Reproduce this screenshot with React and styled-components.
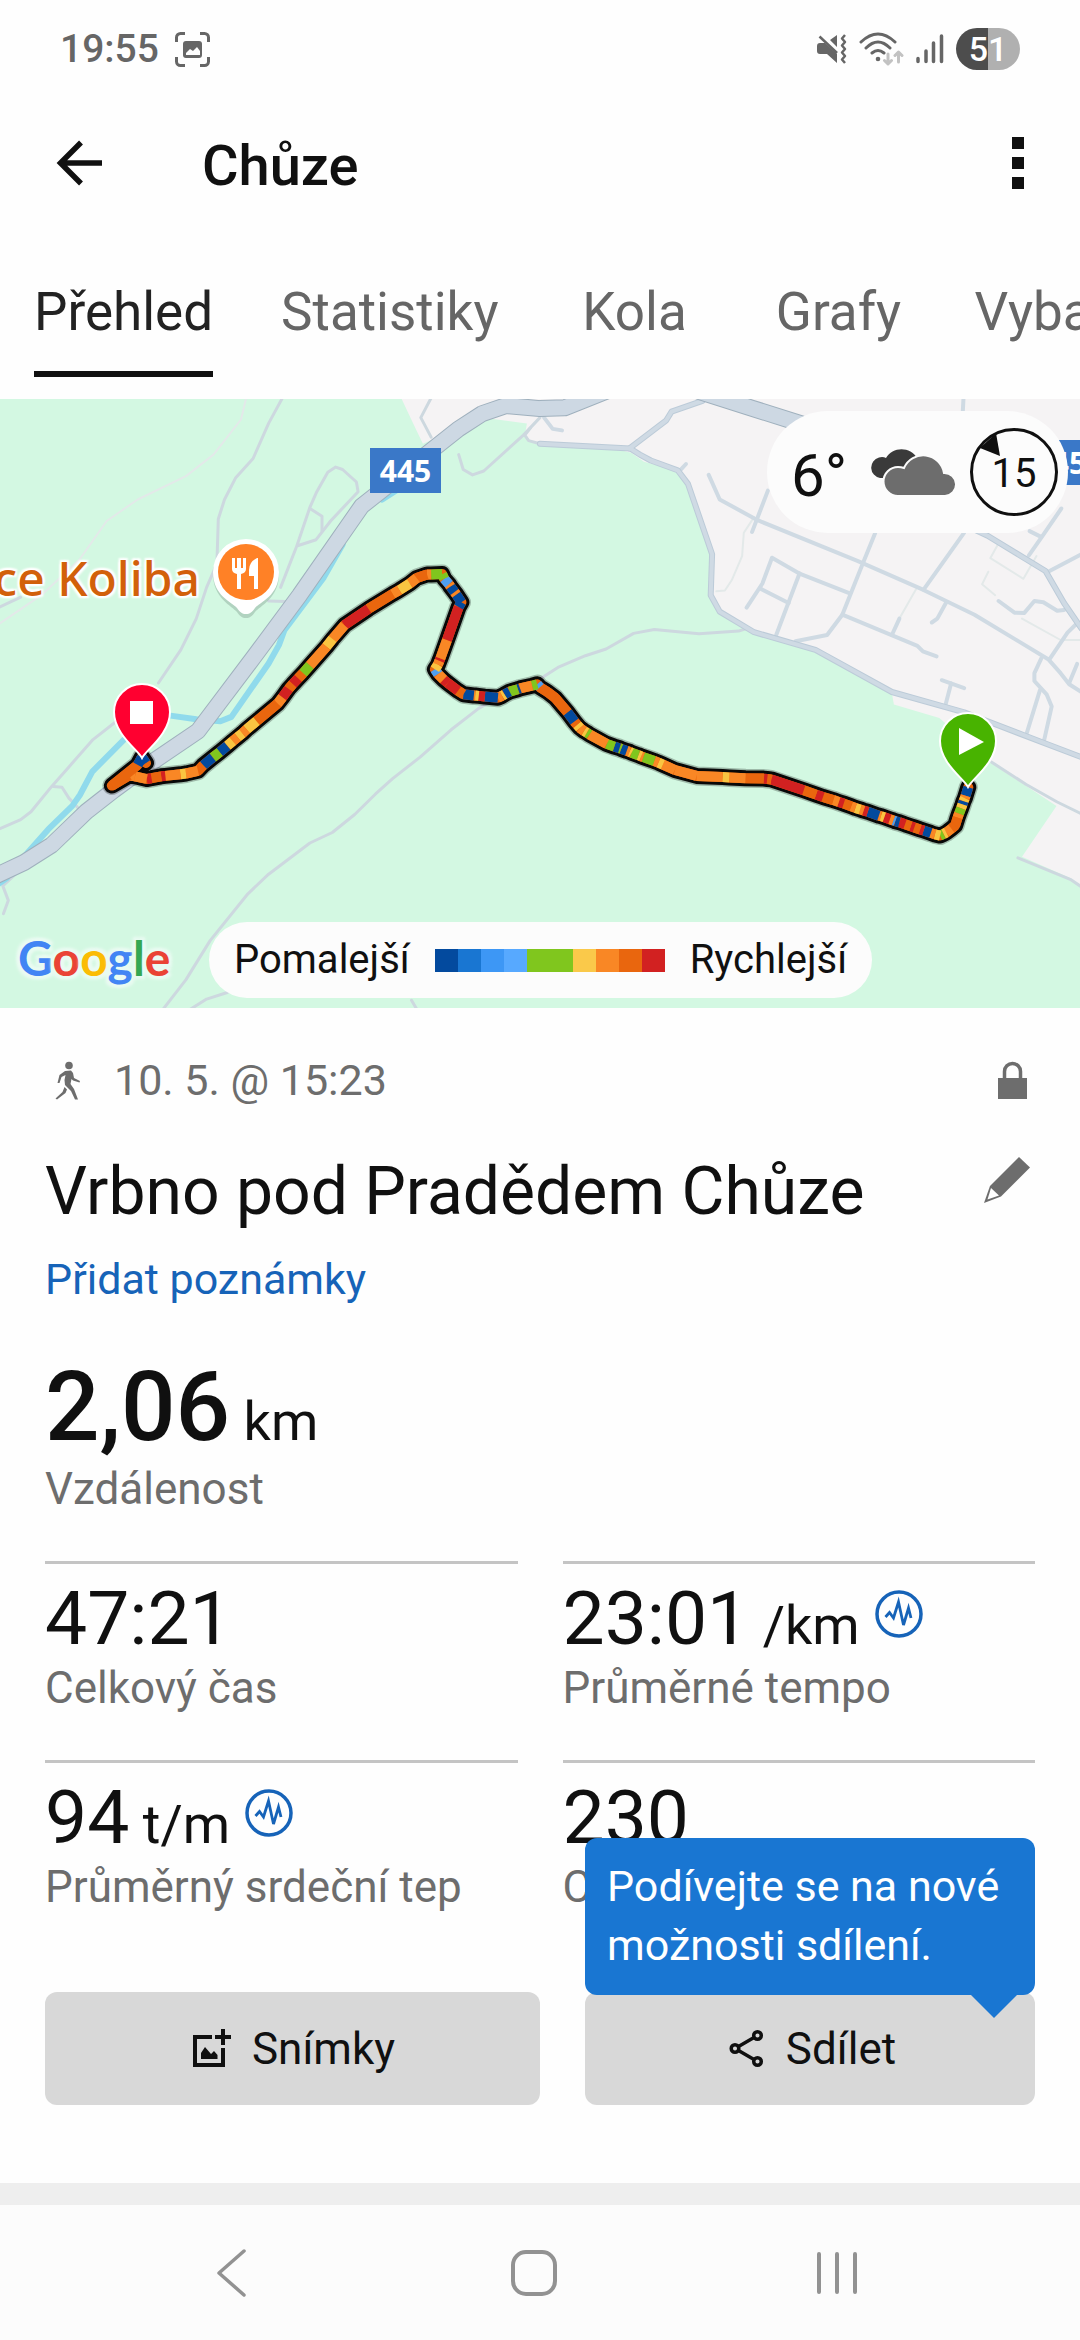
import React from "react";
import styled, { createGlobalStyle } from "styled-components";

const Global = createGlobalStyle`
  *, *::before, *::after { box-sizing: border-box; }
  body {
    margin: 0;
    background: #fefefe;
    color: #101010;
    font-family: Roboto, "Noto Sans", sans-serif;
    -webkit-font-smoothing: antialiased;
  }
  button { font: inherit; color: inherit; border: 0; padding: 0; background: none; cursor: pointer; }
  svg { display: block; }
`;

const Screen = styled.div`
  display: flex;
  flex-direction: column;
  min-height: 100vh;
  overflow: hidden;
`;

/* ---------- status bar ---------- */

const StatusBar = styled.div`
  display: flex;
  align-items: center;
  justify-content: space-between;
  height: 98px;
  padding: 0 60px;
  color: #666;
`;

const StatusGroup = styled.div`
  display: flex;
  align-items: center;
  gap: ${(p) => p.$gap}px;
`;

const Clock = styled.time`
  font-size: 39px;
  font-weight: 500;
`;

const Battery = styled.div`
  display: flex;
  align-items: center;
  justify-content: center;
  width: 64px;
  height: 42px;
  border-radius: 21px;
  background: linear-gradient(90deg, #4d4d4d 50%, #b0b0b0 50%);
  color: #fff;
  font-size: 34px;
  font-weight: 500;
  line-height: 42px;
`;

/* ---------- header ---------- */

const Header = styled.header`
  display: flex;
  align-items: center;
  height: 130px;
  padding: 0 56px 0 50px;
`;

const IconButton = styled.button`
  display: flex;
  align-items: center;
  justify-content: center;
  flex: none;
`;

const HeaderTitle = styled.h1`
  flex: 1;
  margin: 0 0 0 94px;
  padding-top: 6px;
  font-size: 56px;
  font-weight: 500;
  line-height: 64px;
`;

const Tabs = styled.nav`
  display: flex;
  height: 171px;
  padding-bottom: 22px;
  overflow: hidden;
`;

const Tab = styled.button`
  display: flex;
  justify-content: center;
  flex: none;
  min-width: 204px;
  padding: 0 34px;
  font-size: 53px;
  line-height: 62px;
  color: ${(p) => (p.$active ? "#222" : "#666")};
`;

const TabText = styled.span`
  display: flex;
  align-items: flex-end;
  height: 100%;
  padding-bottom: 28px;
  border-bottom: 6px solid ${(p) => (p.$active ? "#101010" : "transparent")};
`;

/* ---------- map ---------- */

const MapArea = styled.section`
  position: relative;
  height: 609px;
  overflow: hidden;
  background: #d3f8e2;
`;

const MapCanvas = styled.svg`
  width: 100%;
  height: 100%;
`;

const RoadSign = styled.span`
  position: absolute;
  top: ${(p) => p.$top}px;
  left: ${(p) => p.$left}px;
  width: 71px;
  background: #3a78c8;
  color: #fff;
  font: 700 30px/45px "Noto Sans", sans-serif;
  text-align: center;
`;

const PlaceName = styled.span`
  position: absolute;
  top: 149px;
  right: calc(100% - 200px);
  color: #d2600a;
  font: 500 48px/60px "Noto Sans", sans-serif;
  white-space: nowrap;
  text-shadow: 0 0 3px #fff, 2px 2px 2px #fff, -2px -2px 2px #fff, 2px -2px 2px #fff, -2px 2px 2px #fff;
`;

const GoogleMark = styled.span`
  position: absolute;
  left: 18px;
  bottom: 20px;
  font: 700 48px/60px Lato, sans-serif;
  text-shadow: 0 0 4px #eafbf2, 3px 3px 3px #eafbf2, -3px -3px 3px #eafbf2, 3px -3px 3px #eafbf2, -3px 3px 3px #eafbf2;
`;

const Tint = styled.span`
  color: ${(p) => p.$c};
`;

const WeatherPill = styled.div`
  position: absolute;
  top: 12px;
  right: 12px;
  display: flex;
  align-items: center;
  height: 122px;
  padding: 0 9px 0 24px;
  border-radius: 61px;
  background: #fcfcfc;
`;

const Temperature = styled.span`
  width: 76px;
  padding-top: 8px;
  font-size: 60px;
  line-height: 70px;
`;

const Wind = styled.div`
  position: relative;
  display: flex;
  align-items: center;
  justify-content: center;
  width: 90px;
  height: 90px;
  margin-left: 12px;
  padding-top: 4px;
  font-size: 40px;
  line-height: 46px;
`;

const WindDial = styled.svg`
  position: absolute;
  inset: 0;
`;

const Legend = styled.div`
  position: absolute;
  left: 209px;
  bottom: 10px;
  display: flex;
  align-items: center;
  gap: 25px;
  height: 76px;
  padding: 0 25px;
  border-radius: 38px;
  background: #fcfcfc;
  font-size: 40px;
  line-height: 46px;
`;

const Scale = styled.div`
  display: flex;
  height: 23px;
`;

const Swatch = styled.span`
  width: 23px;
  background: ${(p) => p.$c};
`;

/* ---------- details ---------- */

const Details = styled.main`
  display: flex;
  flex-direction: column;
  padding: 46px 45px 78px;
  font-size: 43px;
  line-height: 50px;
`;

const MetaRow = styled.div`
  display: flex;
  align-items: center;
  height: 52px;
  color: #6d6d6d;
`;

const MetaDate = styled.time`
  flex: 1;
  margin-left: 24px;
`;

const TitleRow = styled.div`
  display: flex;
  align-items: flex-start;
  justify-content: space-between;
  margin-top: 48px;
`;

const ActivityTitle = styled.h2`
  margin: 0;
  font-size: 66px;
  font-weight: 400;
  line-height: 76px;
`;

const NotesLink = styled.a`
  align-self: flex-start;
  margin-top: 24px;
  color: #1663b8;
  text-decoration: none;
`;

const Stat = styled.div`
  display: flex;
  flex-direction: column;
  gap: 1px;
  ${(p) =>
    p.$hero
      ? "margin-top: 47px;"
      : "border-top: 3px solid #c4c4c4; padding: 10px 0 47px;"}
`;

const StatLine = styled.div`
  display: flex;
  align-items: flex-start;
  gap: 15px;
`;

const StatValue = styled.span`
  font-size: ${(p) => (p.$hero ? 96 : 75)}px;
  font-weight: ${(p) => (p.$hero ? 500 : 400)};
  line-height: ${(p) => (p.$hero ? 112 : 88)}px;
  white-space: pre;
`;

const Unit = styled.span`
  font-size: 54px;
  font-weight: 400;
  line-height: 54px;
`;

const StatLabel = styled.span`
  color: #6d6d6d;
  font-size: 44px;
  white-space: nowrap;
`;

const PulseButton = styled.button`
  margin-top: 16px;
`;

const StatGrid = styled.div`
  display: grid;
  grid-template-columns: 1fr 1fr;
  column-gap: 45px;
  margin-top: 47px;
`;

const Actions = styled.div`
  display: grid;
  grid-template-columns: 11fr 10fr;
  gap: 45px;
  margin-top: 33px;
`;

const ActionCell = styled.div`
  position: relative;
  display: flex;
`;

const ActionButton = styled.button`
  display: flex;
  flex: 1;
  align-items: center;
  justify-content: center;
  gap: 19px;
  height: 113px;
  border-radius: 12px;
  background: #d8d8d8;
  font-size: 44px;
`;

const Tooltip = styled.div`
  position: absolute;
  left: 0;
  right: 0;
  bottom: calc(100% - 3px);
  padding: 19px 22px 20px;
  border-radius: 12px;
  background: #1976d2;
  color: #fff;
  line-height: 59px;

  &::after {
    content: "";
    position: absolute;
    top: 100%;
    right: 18px;
    border: 23px solid transparent;
    border-top-color: #1976d2;
    border-bottom: 0;
  }
`;

const Divider = styled.div`
  height: 22px;
  background: #eee;
`;

const SystemNav = styled.nav`
  display: grid;
  grid-template-columns: repeat(3, 1fr);
  flex: 1;
  min-height: 135px;
  padding: 0 92px 0 80px;
  background: #fcfcfc;
`;

/* ---------- map data ---------- */

/* Map features are kept in grid units: two tiles of 1568 units side by side. */
const UX = 2.904;
const UY = 2.562;
const TILE = 1568;
const at = (x, y, tile = 0) =>
  `${((x + tile * TILE) / UX).toFixed(1)} ${(y / UY + 1).toFixed(1)}`;
const line = (pts, tile = 0) => {
  const out = [];
  for (let i = 0; i < pts.length; i += 2) out.push(at(pts[i], pts[i + 1], tile));
  return "M" + out.join("L");
};

const TOWN = [
  1165, -5, 1200, 60, 1228, 112, 1300, 85, 1400, 45, 1530, 60, 1524, 92, 1545, 108, 1768, 122,
  1833, 135, 1870, 158, 1968, 182, 2000, 215, 2068, 400, 2063, 500, 2090, 545, 2168, 592,
  2350, 637, 2590, 752, 2596, 780, 2728, 815, 2878, 930, 3068, 1040, 2968, 1170, 3108, 1225,
  3140, 1245, 3140, -5,
];

const MAIN_ROADS = [
  [-20, 1222, 70, 1185, 150, 1140, 250, 1055, 330, 1000, 430, 935, 575, 848, 740, 655, 870, 500,
    1050, 272, 1110, 230, 1230, 145, 1330, 75, 1400, 35, 1470, 14, 1568, 22, 1640, 20, 1768, -25],
  [2030, -22, 2180, 20, 2330, 62, 2560, 180],
];

const STREETS = [
  [1568, 112, 1830, 124, 1858, 140, 1890, 155, 1968, 180, 1998, 215, 2068, 395, 2064, 500, 2090, 542,
    2190, 595, 2368, 640, 2590, 748, 2800, 800, 3030, 878, 3140, 915],
  [1828, 124, 1935, 52, 1950, 30, 2040, 2],
  [2800, 320, 2868, 348, 3036, 438, 3090, 520, 3140, 585],
];

const LANES = [
  [2058, 192, 2090, 255, 2200, 308, 2490, 412, 2680, 486, 2830, 550, 3044, 664, 3080, 700, 3105, 728, 3140, 748],
  [2230, 232, 2184, 338],
  [2542, 340, 2506, 418, 2446, 550, 2402, 602, 2310, 618],
  [2800, 340, 2682, 486],
  [2168, 532, 2214, 470, 2242, 404, 2320, 444, 2466, 495],
  [2322, 444, 2254, 602],
  [2210, 484, 2290, 520],
  [2446, 550, 2664, 630, 2680, 644, 2720, 657],
  [2590, 602, 2612, 560],
  [2748, 518, 2722, 560, 2706, 570],
  [2988, 398, 3030, 345, 3082, 278],
  [2990, 336, 3022, 350],
  [2900, 515, 2946, 545, 2974, 546, 3004, 515, 3030, 518, 3070, 540, 3090, 538],
  [3048, 438, 3140, 395],
  [3048, 664, 3100, 596, 3130, 570],
  [3024, 662, 3004, 700, 3004, 720, 3040, 755, 3054, 785, 3032, 872],
  [3020, 744, 2982, 852],
  [3105, 725, 3128, 676],
  [2735, 718, 2800, 738],
  [2762, 726, 2746, 780],
  [2796, 30, 2798, -5],
  [1975, 180, 1992, 164],
  [1580, 45, 1605, 74, 1632, 78],
];

const PATHS = [
  [820, -5, 780, 60, 735, 150, 684, 200, 652, 255, 634, 305, 630, 420, 600, 480, 570, 560, 525, 640, 460, 725],
  [340, 822, 270, 870, 200, 940, 150, 990, 90, 1055, 60, 1075, -5, 1100],
  [155, 990, 180, 992, 200, 1020, 230, 1048],
  [1440, 765, 1390, 790, 1310, 845, 1220, 915, 1140, 970, 1090, 1010, 1030, 1062, 965, 1108, 900, 1135,
    780, 1215, 720, 1265, 610, 1385, 540, 1485, 470, 1565],
  [1568, 715, 1620, 685, 1700, 655, 1760, 638, 1840, 598, 1900, 588, 2030, 599, 2145, 592, 2170, 585],
  [780, 515, 830, 516],
  [815, 480, 862, 374, 900, 275, 920, 235, 952, 185, 975, 172, 995, 178, 1035, 210, 1040, 235, 960, 310, 918, 358, 862, 374],
  [900, 278, 935, 298, 935, 335],
  [1332, 140, 1345, 178, 1372, 192, 1405, 182, 1520, 90, 1568, 45],
  [1568, 112, 1535, 104, 1524, 90, 1540, 72],
  [1252, -5, 1222, 45, 1252, 95],
  [540, 1568, 600, 1535, 660, 1518],
  [1195, 1538, 1215, 1568],
  [45, 1215, 8, 1245, 24, 1282, 10, 1316],
  [-5, 532, 60, 505],
  [2880, 928, 2980, 985, 3070, 1030, 3140, 1060],
  [2956, 1173, 3108, 1228, 3140, 1247],
];

const FAINT_PATHS = [
  [715, -5, 700, 50, 620, 140, 540, 195, 400, 255, 310, 310, 230, 410, 120, 500, -5, 575],
  [2080, 490, 2105, 488, 2125, 462, 2155, 400, 2160, 340, 2190, 300],
  [2870, 440, 2852, 472, 2890, 500],
  [2898, 370, 2876, 405, 2972, 458, 3010, 400],
  [2612, 560, 2660, 485],
  [2968, 560, 3080, 615, 3140, 615],
];

const STREAMS = [
  [60, 1180, 140, 1100, 210, 1040, 232, 1012, 268, 952, 360, 870],
  [490, 808, 570, 818, 640, 823, 672, 812, 780, 675, 810, 628, 826, 590, 940, 455, 995, 370],
  [1110, 255, 1180, 215, 1270, 140],
  [-5, 1240, 20, 1225],
];

const N = "#034a9e";
const B = "#4f9ff0";
const G = "#80c61e";
const Y = "#f9c541";
const O = "#f98725";
const D = "#e9660e";
const R = "#d22121";

/* [x, y, colour of the stretch that ends here] */
const TRACK = [
  [2812, 992], [2804, 1014, N], [2802, 1020, O], [2798, 1028, Y], [2795, 1036, N], [2791, 1046, Y],
  [2785, 1060, G], [2781, 1070, O], [2774, 1090, D], [2763, 1098, D], [2748, 1108, O],
  [2740, 1112, Y], [2730, 1116, G], [2715, 1113, Y], [2703, 1109, O], [2682, 1103, N], [2672, 1100, R],
  [2655, 1095, D], [2645, 1092, R], [2628, 1087, D], [2612, 1082, R], [2600, 1079, N], [2594, 1077, B],
  [2584, 1074, O], [2568, 1069, R], [2558, 1066, Y], [2552, 1065, O], [2520, 1055, N], [2508, 1052, R],
  [2498, 1049, O], [2484, 1045, Y], [2472, 1041, O], [2450, 1034, D], [2436, 1030, R], [2420, 1025, O],
  [2390, 1017, D], [2370, 1011, R], [2334, 1000, D], [2240, 972, R], [2228, 971, D], [2218, 970, R],
  [2165, 969, D], [2118, 967, O], [2098, 966, Y], [2023, 963, O], [1960, 948, O], [1925, 934, O],
  [1912, 929, Y], [1900, 925, O], [1868, 915, G], [1862, 913, O], [1854, 910, Y], [1834, 904, G],
  [1828, 901, Y], [1820, 899, O], [1804, 894, N], [1799, 892, G], [1784, 888, N], [1762, 881, G],
  [1712, 857, O], [1704, 852, G], [1696, 848, Y], [1684, 840, O], [1676, 832, Y], [1668, 824, D],
  [1648, 800, N], [1612, 763, D], [1590, 748, D], [1568, 736, D], [1560, 728, B], [1545, 732, G],
  [1510, 739, O], [1504, 741, N], [1480, 747, G], [1465, 754, N], [1458, 758, Y], [1446, 763, O],
  [1408, 760, N], [1390, 758, R], [1380, 757, Y], [1376, 757, O], [1346, 754, N], [1330, 745, D],
  [1300, 725, R], [1288, 716, R], [1272, 702, O], [1263, 690, B], [1272, 678, Y], [1276, 668, O],
  [1279, 662, R], [1298, 615, O], [1332, 530, R], [1340, 518, N], [1325, 498, N], [1320, 492, O],
  [1308, 478, N], [1304, 472, O], [1290, 458, B], [1284, 446, G], [1252, 447, G], [1240, 447, O],
  [1210, 456, D], [1190, 470, O], [1160, 487, Y], [1140, 497, O], [1070, 535, D], [1000, 577, R],
  [966, 612, O], [948, 632, Y], [900, 680, O], [880, 700, G], [866, 713, D], [850, 728, R],
  [838, 740, D], [820, 762, R], [806, 778, O], [745, 823, D], [716, 844, Y], [704, 854, O],
  [690, 864, Y], [676, 874, O], [660, 886, Y], [638, 902, N], [618, 916, G], [590, 936, N],
  [575, 950, D], [540, 957, O], [524, 959, Y], [480, 963, O], [468, 964, R], [440, 969, D],
  [426, 971, R], [392, 964, O], [375, 962, O], [325, 988, D], [400, 935, D], [412, 915, N], [424, 930, N],
];

const trackPath = line(TRACK.flatMap(([x, y]) => [x, y]));

function Lines({ items, color, width }) {
  return (
    <g fill="none" stroke={color} strokeWidth={width} strokeLinecap="round" strokeLinejoin="round">
      {items.map((pts, i) => (
        <path key={i} d={line(pts)} />
      ))}
    </g>
  );
}

function RouteMap() {
  return (
    <MapCanvas viewBox="0 0 1080 609" preserveAspectRatio="xMidYMid slice" role="img" aria-label="Mapa trasy">
      <rect width="1080" height="610" fill="#d3f8e2" />
      <path d={line(TOWN) + "Z"} fill="#f5f3f4" />
      <Lines items={FAINT_PATHS} color="#e3e9e9" width={2} />
      <Lines items={PATHS} color="#cdd8df" width={3} />
      <Lines items={LANES} color="#cfdae3" width={4} />
      <Lines items={STREAMS} color="#90daec" width={6} />
      <Lines items={STREETS} color="#bccbd8" width={6} />
      <Lines items={STREETS} color="#cfdae4" width={4} />
      <Lines items={MAIN_ROADS} color="#9fb0bd" width={17} />
      <Lines items={MAIN_ROADS} color="#cdd8e3" width={15} />

      <g fill="none" strokeLinejoin="round">
        <path d={trackPath} stroke="#000" strokeOpacity="0.25" strokeWidth="19" strokeLinecap="round" />
        <path d={trackPath} stroke="#080808" strokeWidth="16" strokeLinecap="round" />
        <path d={trackPath} stroke={D} strokeWidth="10" strokeLinecap="round" />
        {TRACK.slice(1).map(([x, y, c], i) => (
          <path key={i} d={line([TRACK[i][0], TRACK[i][1], x, y])} stroke={c} strokeWidth="10" />
        ))}
      </g>

      {/* restaurant */}
      <g transform="translate(246 173)">
        <path d="M0 44C-4 44-6 42-9 38C-14 32-33 24-33 0A33 33 0 0 1 33 0C33 24 14 32 9 38C6 42 4 44 0 44Z" fill="#8fae9d" opacity=".5" transform="translate(0 2)" />
        <path d="M0 42C-4 42-6 40-9 36C-14 30-33 24-33 0A33 33 0 0 1 33 0C33 24 14 30 9 36C6 40 4 42 0 42Z" fill="#fff" />
        <circle r="28" fill="#ff8126" />
        <path d="M-14-14V-3Q-14 1-9 2V17H-5V2Q0 1 0-3V-14H-3V-4H-5V-14H-9V-4H-11V-14ZM11-14Q3-10 3-2V4H8V17H12V-14Z" fill="#fff" />
      </g>

      {/* finish */}
      <g transform="translate(142 285)">
        <path d="M0 74C-4 66-28 50-28 28A28 28 0 0 1 28 28C28 50 4 66 0 74Z" fill="#ff0030" stroke="#fff" strokeWidth="2" />
        <rect x="-12" y="17" width="23" height="23" fill="#fff" />
      </g>

      {/* start */}
      <g transform="translate(968 314)">
        <path d="M0 74C-4 66-28 50-28 28A28 28 0 0 1 28 28C28 50 4 66 0 74Z" fill="#48b300" stroke="#fff" strokeWidth="2" />
        <path d="M-9 15L16 29L-9 42Z" fill="#fff" />
      </g>
    </MapCanvas>
  );
}

/* ---------- icons ---------- */

const CaptureIcon = () => (
  <svg width="35" height="35" viewBox="0 0 35 35" fill="none">
    <path d="M1.500 10V5.500A4 4 0 0 1 5.500 1.500H10M25 1.500H29.500A4 4 0 0 1 33.500 5.500V10M33.500 25V29.500A4 4 0 0 1 29.500 33.500H25M10 33.500H5.500A4 4 0 0 1 1.500 29.500V25" stroke="#666" strokeWidth="3" />
    <rect x="8" y="9" width="19" height="17" rx="3" fill="#666" />
    <path d="M11 23V21L15 17L18 19L22 15L25 19V23Z" fill="#fefefe" />
  </svg>
);

const MuteIcon = () => (
  <svg width="30" height="30" viewBox="0 0 30 30" fill="#666">
    <path d="M3 9H8L20 20V29L10 20H3Q0 20 0 17V12Q0 9 3 9ZM13 6L20 1V13Z" />
    <path d="M2.500 2.500L20 19" stroke="#666" strokeWidth="2.500" />
    <path d="M28 1L25 4.500L28 8L25 11.500L28 15L25 18.500L28 22L25 25.500L28 29" fill="none" stroke="#666" strokeWidth="2.500" strokeLinejoin="round" />
  </svg>
);

const WifiIcon = () => (
  <svg width="45" height="34" viewBox="0 0 45 34" fill="none" strokeLinecap="round">
    <g stroke="#666" strokeWidth="3">
      <path d="M2 10Q19-6 36 10M7 16Q19 4 31 16M13 21Q19 16 25 21" />
    </g>
    <circle cx="19" cy="27" r="2.300" fill="#666" />
    <path d="M29 22V32M25.500 28.500L29 32L32.500 28.500M39.500 30V20M36 23.500L39.500 20L43 23.500" stroke="#c2c2c2" strokeWidth="3" strokeLinejoin="round" />
  </svg>
);

const SignalIcon = () => (
  <svg width="28" height="30" viewBox="0 0 28 30" stroke="#666" strokeWidth="3.500" strokeLinecap="round">
    <path d="M2 24.500V27.500M10 17V27.500M17.500 9V27.500M25.500 2V27.500" />
  </svg>
);

const BackArrow = () => (
  <svg width="58" height="58" viewBox="0 0 58 58" fill="none" stroke="#101010" strokeWidth="5.500">
    <path d="M52 29H11M31 8.500L10.500 29L31 49.500" />
  </svg>
);

const MoreIcon = () => (
  <svg width="12" height="52" viewBox="0 0 12 52" fill="#101010">
    <path d="M0 0H12V12H0ZM0 20H12V32H0ZM0 40H12V52H0Z" />
  </svg>
);

const CloudIcon = () => (
  <svg width="90" height="50" viewBox="0 0 90 50">
    <path d="M13 31A10.500 10.500 0 0 1 12 10.500Q16 9.500 19 11A18 18 0 0 1 50 11L40 31Z" fill="#3a3a3a" />
    <path d="M31 49A14 14 0 0 1 31 20Q34 20 37 21A21 21 0 0 1 77 26A11.500 11.500 0 0 1 78 49Z" fill="#6d6d6d" stroke="#fcfcfc" strokeWidth="2" />
  </svg>
);

const WalkIcon = () => (
  <svg width="45" height="45" viewBox="0 0 45 45" fill="#6d6d6d">
    <circle cx="24" cy="7.500" r="3.800" />
    <path d="M20 13L26 12.500L28 15L29 20L35 23L34.500 24.500L28 22.500L26.500 21L25.500 26L29 31L33 41.500H30L26 33L20 27L19.500 22L20.500 17L16.500 19L14.500 25H12.500L14.500 17Z" />
    <path d="M19.500 29L22 31.500L20.500 35L12 41.500L10.500 40.500L17.500 34Z" />
  </svg>
);

const LockIcon = () => (
  <svg width="45" height="45" viewBox="0 0 45 45">
    <path d="M14.500 22V13.500A8 8 0 0 1 30.500 13.500V22" fill="none" stroke="#6d6d6d" strokeWidth="3.500" />
    <rect x="8" y="20" width="29" height="21" fill="#6d6d6d" />
  </svg>
);

const PencilIcon = () => (
  <svg width="52" height="52" viewBox="0 0 52 52">
    <path d="M36 3L47 13.500L18 42.500L1 49L7 32Z" fill="#6d6d6d" />
    <path d="M8 34L16 41.500L4.500 45.500Z" fill="#fefefe" />
  </svg>
);

const PulseIcon = () => (
  <svg width="48" height="48" viewBox="0 0 48 48" fill="none" stroke="#1663b8">
    <circle cx="24" cy="24" r="22" strokeWidth="3.500" />
    <path d="M10.500 27L14.500 22.500L18.500 28L23.500 12L28.500 35L33.500 18L36 28" strokeWidth="2.800" />
  </svg>
);

const SnapshotIcon = () => (
  <svg width="43" height="45" viewBox="0 0 43 45" fill="#101010">
    <path d="M3 9H22V13H7V37H31V22H35V41H3Z" />
    <path d="M31 3H35V9H41V13H35V19H31V13H25V9H31Z" />
    <path d="M11 33V27L15 21L21 28L24 25L27.500 29V33Z" />
  </svg>
);

const ShareIcon = () => (
  <svg width="43" height="45" viewBox="0 0 43 45" fill="none" stroke="#101010" strokeWidth="3.500">
    <circle cx="11" cy="22.500" r="3.800" />
    <circle cx="33.500" cy="9.500" r="3.800" />
    <circle cx="33.500" cy="35.500" r="3.800" />
    <path d="M14.500 20.500L30 11.500M14.500 24.500L30 33.500" />
  </svg>
);

const NavBackIcon = () => (
  <svg width="32" height="50" viewBox="0 0 32 50" fill="none" stroke="#929292" strokeWidth="3.500" strokeLinecap="round" strokeLinejoin="round">
    <path d="M29 3L4 25L29 47" />
  </svg>
);

const NavHomeIcon = () => (
  <svg width="46" height="46" viewBox="0 0 46 46" fill="none" stroke="#929292" strokeWidth="4">
    <rect x="2" y="2" width="42" height="42" rx="13" />
  </svg>
);

const NavRecentsIcon = () => (
  <svg width="42" height="44" viewBox="0 0 42 44" stroke="#929292" strokeWidth="4" strokeLinecap="round">
    <path d="M3 3V41M21 3V41M39 3V41" />
  </svg>
);

/* ---------- screen ---------- */

const TABS = ["Přehled", "Statistiky", "Kola", "Grafy", "Vybavení"];

const SPEED_SCALE = [N, "#1976d2", "#3d97f5", "#57a9ff", G, G, "#fac94a", O, D, R];

const GOOGLE = [
  ["G", "#4285f4"],
  ["o", "#ea4335"],
  ["o", "#fbbc05"],
  ["g", "#4285f4"],
  ["l", "#34a853"],
  ["e", "#ea4335"],
];

const STATS = [
  { value: "47:21", label: "Celkový čas" },
  { value: "23:01", unit: "/km", label: "Průměrné tempo", pulse: true },
  { value: "94", unit: "t/m", label: "Průměrný srdeční tep", pulse: true },
  { value: "230", label: "Celkem kalorií" },
];

function StatItem({ value, unit, label, pulse, hero }) {
  return (
    <Stat $hero={hero}>
      <StatLine>
        <StatValue $hero={hero}>
          {value}
          {unit && <Unit> {unit}</Unit>}
        </StatValue>
        {pulse && (
          <PulseButton aria-label={`Graf: ${label}`}>
            <PulseIcon />
          </PulseButton>
        )}
      </StatLine>
      <StatLabel>{label}</StatLabel>
    </Stat>
  );
}

export default function App() {
  return (
    <Screen>
      <Global />
      <StatusBar>
        <StatusGroup $gap={16}>
          <Clock>19:55</Clock>
          <CaptureIcon />
        </StatusGroup>
        <StatusGroup $gap={12}>
          <MuteIcon />
          <WifiIcon />
          <SignalIcon />
          <Battery>51</Battery>
        </StatusGroup>
      </StatusBar>

      <Header>
        <IconButton aria-label="Zpět">
          <BackArrow />
        </IconButton>
        <HeaderTitle>Chůze</HeaderTitle>
        <IconButton aria-label="Další možnosti">
          <MoreIcon />
        </IconButton>
      </Header>

      <Tabs>
        {TABS.map((name, i) => (
          <Tab key={name} $active={i === 0} aria-current={i === 0 ? "page" : undefined}>
            <TabText $active={i === 0}>{name}</TabText>
          </Tab>
        ))}
      </Tabs>

      <MapArea>
        <RouteMap />
        <RoadSign $left={370} $top={49}>445</RoadSign>
        <RoadSign $left={1042} $top={41}>451</RoadSign>
        <PlaceName>Restaurace Koliba</PlaceName>
        <GoogleMark>
          {GOOGLE.map(([ch, c], i) => (
            <Tint key={i} $c={c}>{ch}</Tint>
          ))}
        </GoogleMark>
        <WeatherPill>
          <Temperature>6°</Temperature>
          <CloudIcon />
          <Wind>
            <WindDial viewBox="0 0 90 90">
              <circle cx="45" cy="45" r="42.500" fill="none" stroke="#101010" strokeWidth="3" />
              <path d="M11 21L27 6L31 29Z" fill="#101010" />
            </WindDial>
            15
          </Wind>
        </WeatherPill>
        <Legend>
          <span>Pomalejší</span>
          <Scale>
            {SPEED_SCALE.map((c, i) => (
              <Swatch key={i} $c={c} />
            ))}
          </Scale>
          <span>Rychlejší</span>
        </Legend>
      </MapArea>

      <Details>
        <MetaRow>
          <WalkIcon />
          <MetaDate>10. 5. @ 15:23</MetaDate>
          <LockIcon />
        </MetaRow>
        <TitleRow>
          <ActivityTitle>Vrbno pod Pradědem Chůze</ActivityTitle>
          <IconButton aria-label="Upravit název">
            <PencilIcon />
          </IconButton>
        </TitleRow>
        <NotesLink href="#poznamky">Přidat poznámky</NotesLink>

        <StatItem hero value="2,06" unit="km" label="Vzdálenost" />
        <StatGrid>
          {STATS.map((s) => (
            <StatItem key={s.label} {...s} />
          ))}
        </StatGrid>

        <Actions>
          <ActionCell>
            <ActionButton>
              <SnapshotIcon />
              Snímky
            </ActionButton>
          </ActionCell>
          <ActionCell>
            <ActionButton>
              <ShareIcon />
              Sdílet
            </ActionButton>
            <Tooltip role="tooltip">Podívejte se na nové možnosti sdílení.</Tooltip>
          </ActionCell>
        </Actions>
      </Details>

      <Divider />
      <SystemNav>
        <IconButton aria-label="Zpět v systému">
          <NavBackIcon />
        </IconButton>
        <IconButton aria-label="Domů">
          <NavHomeIcon />
        </IconButton>
        <IconButton aria-label="Poslední aplikace">
          <NavRecentsIcon />
        </IconButton>
      </SystemNav>
    </Screen>
  );
}
